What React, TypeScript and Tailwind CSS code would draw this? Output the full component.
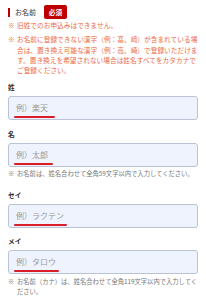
const font = { fontFamily: '"Noto Sans CJK JP", "Noto Sans", sans-serif' };

function Field({ label, example, lineW }: { label: string; example: string; lineW: string }) {
  return (
    <div>
      <div className="text-[6.7px] font-bold leading-[10px] text-[#333]">{label}</div>
      <div className="relative mt-[4px] flex h-[24px] items-center rounded-[3px] border border-[#b9c3d3] bg-[#eef3fd] pl-[7px]">
        <span className="text-[8px] text-[#9a9a9a]">{example}</span>
        <span className={`absolute left-[5px] top-[19px] h-[2px] rounded-full bg-[#d91e2a] ${lineW}`} />
      </div>
    </div>
  );
}

function Note({ children, color, size }: { children: React.ReactNode; color: string; size: string }) {
  return (
    <div className={`flex leading-[10.3px] ${size} ${color}`}>
      <span className="w-[9px] shrink-0">※</span>
      <span className="whitespace-nowrap">{children}</span>
    </div>
  );
}

export default function App() {
  return (
    <div className="min-h-[300px] w-[206px] overflow-hidden bg-white px-[8px] pt-[5px]" style={font}>
      {/* Header */}
      <div className="flex h-[14px] items-center">
        <span className="h-[9px] w-[2px] bg-[#bf0000]" />
        <span className="ml-[5px] text-[7px] text-[#333]">お名前</span>
        <span className="ml-[8px] flex h-[14px] w-[23px] items-center justify-center rounded-[2px] bg-[#bf0000] text-[6.7px] font-bold text-white">
          必須
        </span>
      </div>

      {/* Notes */}
      <div className="mt-[1px] flex flex-col gap-[4px]">
        <Note color="text-[#ec6b45]" size="text-[6.7px]">旧姓でのお申込みはできません。</Note>
        <Note color="text-[#ec6b45]" size="text-[6.7px]">
          お名前に登録できない漢字（例：髙、﨑）が含まれている場
          <br />
          合は、置き換え可能な漢字（例：高、崎）で登録いただけま
          <br />
          す。置き換えを希望されない場合は姓名すべてをカタカナで
          <br />
          ご登録ください。
        </Note>
      </div>

      <div className="mt-[7px]">
        <Field label="姓" example="例）楽天" lineW="w-[41px]" />
      </div>
      <div className="mt-[9px]">
        <Field label="名" example="例）太郎" lineW="w-[39px]" />
      </div>
      <div className="mt-[2px]">
        <Note color="text-[#777]" size="text-[6.3px]">
          お名前は、姓名合わせて全角59文字以内で入力してください。
        </Note>
      </div>
      <div className="mt-[10px]">
        <Field label="セイ" example="例）ラクテン" lineW="w-[53px]" />
      </div>
      <div className="mt-[8px]">
        <Field label="メイ" example="例）タロウ" lineW="w-[45px]" />
      </div>
      <div className="mt-[3px]">
        <Note color="text-[#777]" size="text-[6.3px]">
          お名前（カナ）は、姓名合わせて全角119文字以内で入力してく
          <br />
          ださい。
        </Note>
      </div>
    </div>
  );
}
